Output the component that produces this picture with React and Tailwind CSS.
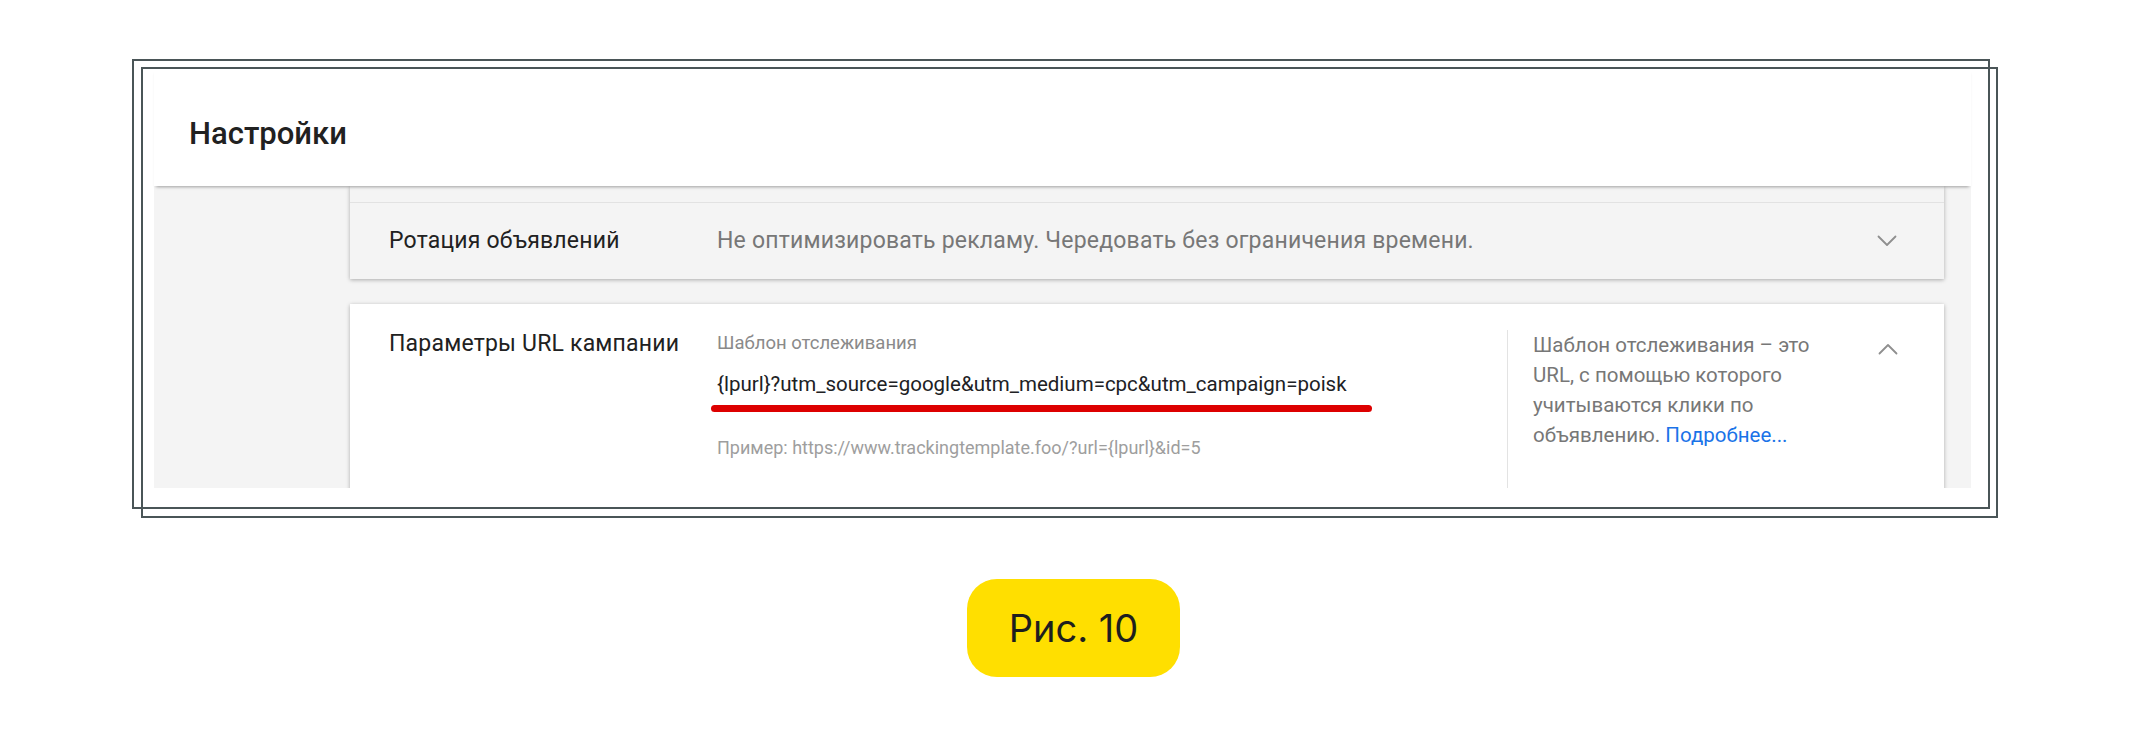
function Chevron({ up = false }) {
  return (
    <svg width="20" height="12" viewBox="0 0 20 12" fill="none" className="block">
      <polyline
        points={up ? "1.5,10.5 10,2 18.5,10.5" : "1.5,1.5 10,10 18.5,1.5"}
        stroke="#8f8f8f"
        strokeWidth="1.8"
        strokeLinecap="round"
        strokeLinejoin="round"
      />
    </svg>
  );
}

export default function App() {
  return (
    <div
      className="w-[2134px] h-[737px] bg-white pt-[67px] pl-[141px] overflow-hidden"
      style={{ fontFamily: "Roboto, 'Liberation Sans', sans-serif" }}
    >
      <div className="relative w-[1857px] h-[451px] border-2 border-[#4a5557] bg-white">
        <div
          aria-hidden="true"
          className="pointer-events-none absolute -left-[11px] -top-[10px] w-[1858px] h-[450px] border-2 border-[#4a5557] z-20"
        />
        <div className="ml-[11px] mr-[25px]">
          <div className="relative z-10 h-[117px] bg-white pl-[35px] pt-[47px] shadow-[0_3px_3px_-2px_rgba(0,0,0,0.35)]">
            <h1 className="text-[31px] leading-[36px] font-medium text-[#212121]">Настройки</h1>
          </div>
          <div className="h-[302px] overflow-hidden bg-[#f4f4f4] pl-[196px] pr-[27px]">
            <div className="bg-[#f4f4f4] shadow-[0_1px_4px_rgba(0,0,0,0.3)]">
              <div className="h-[17px] border-b border-[#e2e2e2]" />
              <div className="h-[76px] flex items-center pl-[39px]">
                <div className="w-[328px] text-[23px] tracking-[0.2px] leading-[28px] text-[#212121]">Ротация объявлений</div>
                <div className="flex-1 text-[23px] tracking-[0.2px] leading-[28px] text-[#777777]">
                  Не оптимизировать рекламу. Чередовать без ограничения времени.
                </div>
                <div className="mr-[47px]">
                  <Chevron />
                </div>
              </div>
            </div>
            <div className="mt-[25px] h-[260px] bg-white shadow-[0_1px_4px_rgba(0,0,0,0.3)] pt-[26px] pl-[39px] flex items-stretch">
              <div className="w-[328px] mt-0 text-[23px] tracking-[0.2px] leading-[28px] text-[#212121]">Параметры URL кампании</div>
              <div className="flex-1 mt-[3px]">
                <div className="text-[18.5px] leading-[20px] text-[#8a8a8a]">Шаблон отслеживания</div>
                <div className="mt-[19px] text-[20.5px] leading-[24px] text-[#202124]">
                  {"{lpurl}?utm_source=google&utm_medium=cpc&utm_campaign=poisk"}
                </div>
                <div className="mt-[9px] -ml-[6px] w-[661px] h-[7px] rounded-full bg-[#dd0000]" />
                <div className="mt-[26px] text-[18px] leading-[20px] text-[#9e9e9e]">
                  {"Пример: https://www.trackingtemplate.foo/?url={lpurl}&id=5"}
                </div>
              </div>
              <div className="w-[325px] border-l border-[#e3e3e3] pl-[25px]">
                <p className="w-[300px] text-[20.5px] leading-[30px] text-[#777777]">
                  Шаблон отслеживания – это URL, с помощью которого учитываются клики по объявлению.{" "}
                  <span className="text-[#1a73e8]">Подробнее...</span>
                </p>
              </div>
              <div className="w-[112px] pl-[46px] pt-[13px]">
                <Chevron up />
              </div>
            </div>
          </div>
        </div>
      </div>
      <div className="mt-[61px] ml-[826px] w-[213px] h-[98px] rounded-[30px] bg-[#ffdf00] flex items-center justify-center">
        <span
          className="text-[38px] leading-none text-[#1e1e1e]"
          style={{ fontFamily: "Inter, 'Open Sans', sans-serif" }}
        >
          Рис. 10
        </span>
      </div>
    </div>
  );
}
